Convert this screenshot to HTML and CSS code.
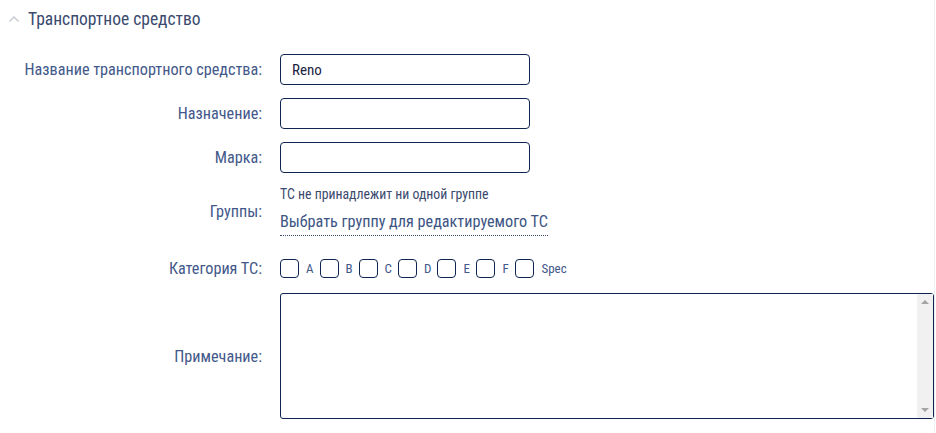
FILE: index.html
```html
<!DOCTYPE html>
<html lang="ru">
<head>
<meta charset="utf-8">
<link rel="stylesheet" href="styles.css">
</head>
<body>
<div class="panel">
  <div class="section-head">
    <svg class="chev" width="12" height="8" viewBox="0 0 12 8"><path d="M1.5 6.5 L6 2 L10.5 6.5" fill="none" stroke="#c4c8cf" stroke-width="1.4"/></svg>
    <span class="section-title">Транспортное средство</span>
  </div>
  <div class="form">
    <label class="lbl">Название транспортного средства:</label>
    <div class="field"><input class="inp" type="text" value="Reno"></div>

    <label class="lbl">Назначение:</label>
    <div class="field"><input class="inp" type="text"></div>

    <label class="lbl">Марка:</label>
    <div class="field"><input class="inp" type="text"></div>

    <label class="lbl">Группы:</label>
    <div class="field groups">
      <div class="hint">ТС не принадлежит ни одной группе</div>
      <a class="link">Выбрать группу для редактируемого ТС</a>
    </div>

    <label class="lbl lbl-cats">Категория ТС:</label>
    <div class="field cats">
      <span class="cb"></span><span class="cl">A</span>
      <span class="cb"></span><span class="cl">B</span>
      <span class="cb"></span><span class="cl">C</span>
      <span class="cb"></span><span class="cl">D</span>
      <span class="cb"></span><span class="cl">E</span>
      <span class="cb"></span><span class="cl">F</span>
      <span class="cb"></span><span class="cl">Spec</span>
    </div>

    <label class="lbl lbl-note">Примечание:</label>
    <div class="field note">
      <textarea class="ta"></textarea>
      <div class="sbar" aria-hidden="true">
        <span class="arrow up"></span>
        <span class="arrow down"></span>
      </div>
    </div>
  </div>
</div>
</body>
</html>
```
FILE: styles.css
```css
html, body {
  margin: 0;
  padding: 0;
  background: #ffffff;
}
body {
  font-family: "Roboto Condensed", Roboto, "Liberation Sans", sans-serif;
  font-stretch: 90%;
  color: #3d5584;
}
.panel {
  width: 935px;
  height: 433px;
  border-right: 1px solid #eceef1;
  box-sizing: border-box;
}
.section-head {
  display: flex;
  align-items: center;
  height: 38px;
  padding-left: 8px;
  gap: 8px;
}
.chev {
  display: block;
}
.section-title {
  font-size: 17.5px;
  color: #3b4a6e;
}
.form {
  display: grid;
  grid-template-columns: 262px 654px;
  column-gap: 18px;
  row-gap: 13px;
  margin-top: 16px;
  align-items: center;
}
.lbl {
  text-align: right;
  font-size: 16.2px;
  color: #43598a;
}
.lbl-cats {
  margin-top: 9px;
}
.lbl-note {
  margin-top: 2px;
}
.field {
  display: flex;
}
.inp {
  width: 250px;
  height: 31px;
  box-sizing: border-box;
  border: 1px solid #0d2550;
  border-radius: 4px;
  padding: 0 11px;
  font-family: "Roboto Condensed", Roboto, "Liberation Sans", sans-serif;
  font-stretch: 90%;
  font-size: 15px;
  color: #1b2340;
  outline: none;
}
.groups {
  flex-direction: column;
  align-items: flex-start;
}
.hint {
  font-size: 13.8px;
  color: #3b4a6e;
  line-height: 16px;
}
.link {
  font-size: 16.2px;
  color: #3d5584;
  line-height: 20px;
  margin-top: 10px;
  padding-bottom: 3px;
  border-bottom: 1px dotted #3d4a6e;
}
.cats {
  align-items: center;
  height: 20px;
  margin-top: 9px;
}
.cb {
  width: 19px;
  height: 19px;
  box-sizing: border-box;
  border: 1.5px solid #0d2550;
  border-radius: 4px;
  margin-right: 7px;
}
.cl {
  font-size: 13px;
  color: #43598a;
  margin-right: 6px;
  min-width: 7px;
}
.note {
  position: relative;
  margin-top: 2px;
}
.ta {
  width: 654px;
  height: 126px;
  box-sizing: border-box;
  border: 1px solid #0d2550;
  border-radius: 3px;
  resize: none;
  outline: none;
  font-family: Roboto, sans-serif;
  margin: 0;
  padding: 2px 20px 2px 4px;
  overflow: hidden;
}
.sbar {
  position: absolute;
  top: 1px;
  right: 1px;
  bottom: 1px;
  width: 16px;
  background: #f1f1f1;
  display: flex;
  flex-direction: column;
  justify-content: space-between;
  align-items: center;
  padding: 6px 0;
  box-sizing: border-box;
}
.arrow {
  width: 0;
  height: 0;
  border-left: 4px solid transparent;
  border-right: 4px solid transparent;
}
.arrow.up {
  border-bottom: 4px solid #a3a3a3;
}
.arrow.down {
  border-top: 4px solid #a3a3a3;
}
```
